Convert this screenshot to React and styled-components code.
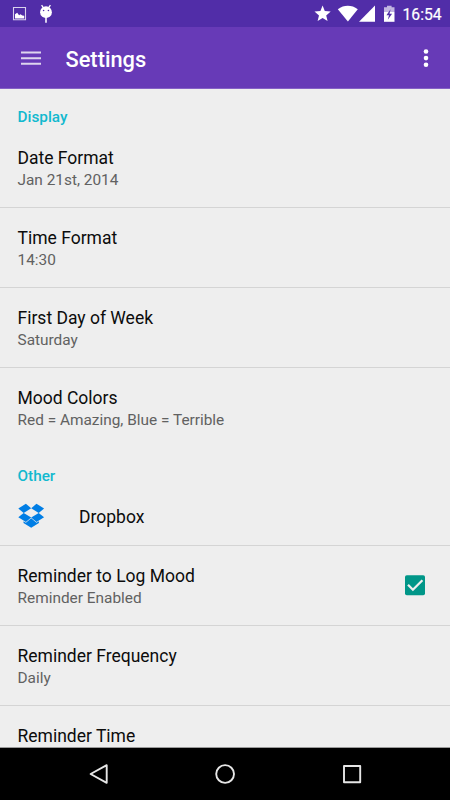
import React from 'react';
import styled, { createGlobalStyle } from 'styled-components';

const GlobalStyle = createGlobalStyle`
  * { box-sizing: border-box; }
  body { margin: 0; background: #eee; font-family: Roboto, sans-serif; }
  svg { display: block; flex: none; }
`;

const Screen = styled.div`
  width: 450px;
  height: 800px;
  display: flex;
  flex-direction: column;
  overflow: hidden;
  background: #eee;
`;

const StatusBar = styled.header`
  flex: none;
  height: 27px;
  display: flex;
  justify-content: space-between;
  background: #512da8;
  color: #fff;
`;

const StatusGroup = styled.div`
  display: flex;
`;

const Clock = styled.time`
  width: 54px;
  padding-left: 6.5px;
  font-size: 15.7px;
  font-weight: 400;
  line-height: 29px;
  -webkit-text-stroke: 0.2px #fff;
`;

const Toolbar = styled.div`
  flex: none;
  height: 62px;
  display: flex;
  align-items: center;
  padding: 0 18px;
  background: #673ab7;
  border-bottom: 1px solid #8561c5;
  color: #fff;
`;

const Title = styled.h1`
  flex: 1;
  margin: 4px 0 0 22.5px;
  font-size: 21.8px;
  line-height: 26px;
  font-weight: 500;
`;

const Content = styled.main`
  flex: none;
  height: 658px;
  overflow: hidden;
`;

const SectionHeader = styled.h2`
  height: 39px;
  margin: 0;
  padding: 18px 17.5px 0;
  font-size: 15.32px;
  line-height: 20px;
  font-weight: 500;
  color: #12b9cf;
`;

const Row = styled.div`
  height: ${(p) => p.$height || 80}px;
  display: flex;
  align-items: center;
  padding: 0 24px 0 17.5px;
  border-bottom: 1px solid ${(p) => (p.$last ? 'transparent' : '#d4d4d4')};
`;

const RowText = styled.div`
  flex: 1;
  padding-top: 2px;
`;

const Label = styled.div`
  font-size: 17.51px;
  line-height: 22px;
  color: #0c0c0c;
`;

const Summary = styled.div`
  min-height: 22px;
  font-size: 15.4px;
  line-height: 22px;
  color: #616161;
`;

const IconSlot = styled.div`
  width: 61.5px;
`;

const NavBar = styled.nav`
  flex: none;
  height: 53px;
  border-top: 1px solid #9a9a9a;
  background: #000;
`;

const Setting = ({ label, summary, last, children }) => (
  <Row $last={last}>
    <RowText>
      <Label>{label}</Label>
      <Summary>{summary}</Summary>
    </RowText>
    {children}
  </Row>
);

const NotificationIcons = () => (
  <svg width="60" height="27" viewBox="0 0 60 27">
    <path fill="none" stroke="#d9d1ec" strokeWidth="1.1" d="M13.500 7.500h12v12.300h-12z" />
    <path fill="#fff" d="M15 18.500v-4.200l2.200-1.500 1.900 2.500 1.400-1 1.800 1.300 1.900.2v2.700z" />
    <path stroke="#fff" strokeWidth="1.3" fill="none" d="M41.600 5.200l2.200 3.200M50.400 5.200l-2.200 3.200" />
    <path stroke="#e8e2f4" strokeWidth="1.800" d="M46 17v5.700" />
    <circle cx="46" cy="12.200" r="5.900" fill="#fff" />
    <circle cx="43.600" cy="10.500" r=".8" fill="#512da8" />
    <circle cx="48.400" cy="10.500" r=".8" fill="#512da8" />
  </svg>
);

const SystemIcons = () => (
  <svg width="82" height="27" viewBox="314 0 82 27">
    <g fill="#fff">
      <path d="M322.600 5.600l2.200 5.400 5.900.5-4.500 3.900 1.400 5.700-5-3.100-5 3.100 1.400-5.700-4.500-3.900 5.900-.5z" />
      <path d="M337.800 9.200C344 4.700 351.600 4.700 357.800 9.200L347.900 21.500z" />
      <path d="M375 5.500v16.200h-16z" />
      <path d="M384 12h10.500v9.800H384z" />
    </g>
    <path fill="#fff" d="M387 5.800h4.600v1.500h2.900v4.700H384V7.300h3z" opacity=".65" />
    <path fill="#512da8" d="M390.600 9.200l-4.200 6h2.600l-1.200 4.600 4.300-6h-2.600z" />
  </svg>
);

const MenuIcon = () => (
  <svg width="25" height="22" viewBox="18 47 25 22">
    <path fill="none" stroke="#ded5ee" strokeWidth="2" d="M21 52.500h20M21 58.200h20M21 63.800h20" />
  </svg>
);

const MoreIcon = () => (
  <svg width="12" height="22" viewBox="420 47 12 22">
    <g fill="#fff">
      <circle cx="426" cy="51.500" r="2.300" />
      <circle cx="426" cy="58.100" r="2.300" />
      <circle cx="426" cy="64.700" r="2.300" />
    </g>
  </svg>
);

const DropboxIcon = () => (
  <svg width="28" height="26" viewBox="17.800 503 28 26">
    <g fill="#007ee5">
      <path d="M25.700 503.700l5.300 4.600-7.500 4.600-5.400-4.500z" />
      <path d="M36.300 503.700l-5.300 4.600 7.500 4.600 5.400-4.500z" />
      <path d="M23.500 512.900l7.500 4.500-5.300 4.600-7.600-4.700z" />
      <path d="M38.500 512.900l-7.500 4.500 5.300 4.600 7.600-4.700z" />
      <path d="M31 518.200l5.300 4.500 2.400-1.500v1.800l-7.700 4.800-7.700-4.800v-1.800l2.400 1.500z" />
    </g>
  </svg>
);

const CheckedBox = () => (
  <svg width="21" height="21" viewBox="0 0 21 21">
    <rect x="0" y=".2" width="20" height="20" rx="1.800" fill="#009688" />
    <path fill="none" stroke="#eee" strokeWidth="2.300" d="M3 9.800l4.900 4.900L17.400 5.200" />
  </svg>
);

const NavIcons = () => (
  <svg width="450" height="52" viewBox="0 748 450 52">
    <g fill="none" stroke="#e6e6e6" strokeWidth="1.900" strokeLinejoin="round">
      <path d="M106.700 765.200v17.600L90.600 774z" />
      <circle cx="225.100" cy="774" r="8.900" />
      <path d="M344 766h16.200v16.200H344z" />
    </g>
  </svg>
);

export default function App() {
  return (
    <Screen>
      <GlobalStyle />
      <StatusBar>
        <NotificationIcons />
        <StatusGroup>
          <SystemIcons />
          <Clock>16:54</Clock>
        </StatusGroup>
      </StatusBar>
      <Toolbar>
        <MenuIcon />
        <Title>Settings</Title>
        <MoreIcon />
      </Toolbar>
      <Content>
        <SectionHeader>Display</SectionHeader>
        <Setting label="Date Format" summary="Jan 21st, 2014" />
        <Setting label="Time Format" summary="14:30" />
        <Setting label="First Day of Week" summary="Saturday" />
        <Setting label="Mood Colors" summary="Red = Amazing, Blue = Terrible" last />
        <SectionHeader>Other</SectionHeader>
        <Row $height={59}>
          <IconSlot>
            <DropboxIcon />
          </IconSlot>
          <RowText>
            <Label>Dropbox</Label>
          </RowText>
        </Row>
        <Setting label="Reminder to Log Mood" summary="Reminder Enabled">
          <CheckedBox />
        </Setting>
        <Setting label="Reminder Frequency" summary="Daily" />
        <Setting label="Reminder Time" />
      </Content>
      <NavBar>
        <NavIcons />
      </NavBar>
    </Screen>
  );
}
